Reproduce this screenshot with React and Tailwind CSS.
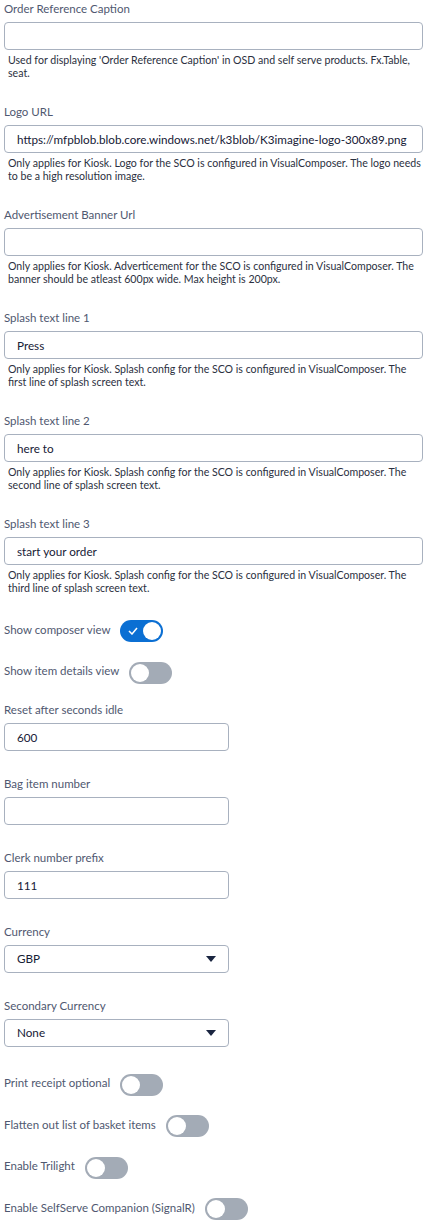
import { useState } from 'react';

const font = { fontFamily: 'Lato, "Noto Sans", sans-serif' };

function TextField({ label, value, help }) {
  return (
    <div className="mb-[23px]">
      <label className="block h-[18px] leading-[18px] text-[11.5px] text-[#4f5870] mb-[4px]">{label}</label>
      <input
        type="text"
        defaultValue={value}
        className="w-[419px] h-[28px] border border-[#a8b1bf] rounded-[4px] px-[12px] text-[11.7px] text-[#162036] outline-none bg-white"
      />
      <p className="mt-[4px] pl-[4px] text-[10.6px] leading-[13px] text-[#2b3040] whitespace-nowrap">
        {help[0]}
        <br />
        {help[1]}
      </p>
    </div>
  );
}

function Toggle({ label, on: initial, last }) {
  const [on, setOn] = useState(initial);
  return (
    <div className={`flex items-center h-[22px] ${last ? '' : 'mb-[19.5px]'}`}>
      <span className="text-[11.5px] text-[#4f5870] mr-[10px] -mt-[3px]">{label}</span>
      <button
        onClick={() => setOn(!on)}
        className={`relative w-[43px] h-[22px] rounded-full ${on ? 'bg-[#0b6fd3]' : 'bg-[#a3abb6]'}`}
      >
        {on && (
          <svg className="absolute left-[8px] top-[7px]" width="10" height="8" viewBox="0 0 10 8">
            <path d="M1 4l3 3 5-6" fill="none" stroke="white" strokeWidth="1.5" />
          </svg>
        )}
        <span
          className={`absolute top-[2px] w-[18px] h-[18px] rounded-full bg-white ${on ? 'left-[23px]' : 'left-[2px]'}`}
        />
      </button>
    </div>
  );
}

function ShortInput({ label, value }) {
  return (
    <div className="mb-[24px]">
      <label className="block h-[18px] leading-[18px] text-[11.5px] text-[#4f5870] mb-[4px]">{label}</label>
      <input type="text" defaultValue={value} className="w-[225px] h-[28px] border border-[#a8b1bf] rounded-[4px] px-[12px] text-[11.7px] text-[#162036] outline-none" />
    </div>
  );
}

function SelectField({ label, value }) {
  return (
    <div className="mb-[24px]">
      <label className="block h-[18px] leading-[18px] text-[11.5px] text-[#4f5870] mb-[4px]">{label}</label>
      <div className="w-[225px] h-[28px] border border-[#a8b1bf] rounded-[4px] pl-[12px] pr-[12px] flex items-center justify-between text-[11.7px] text-[#162036]">
        <span>{value}</span>
        <svg width="10" height="6" viewBox="0 0 10 6">
          <path d="M0 0h10L5 6z" fill="#1a2540" />
        </svg>
      </div>
    </div>
  );
}

export default function App() {
  return (
    <div className="bg-white min-h-screen px-[4px] pt-0 w-[440px]" style={font}>
      <TextField
        label="Order Reference Caption"
        value=""
        help={["Used for displaying 'Order Reference Caption' in OSD and self serve products. Fx.Table,", 'seat.']}
      />
      <TextField
        label="Logo URL"
        value="https://mfpblob.blob.core.windows.net/k3blob/K3imagine-logo-300x89.png"
        help={['Only applies for Kiosk. Logo for the SCO is configured in VisualComposer. The logo needs', 'to be a high resolution image.']}
      />
      <TextField
        label="Advertisement Banner Url"
        value=""
        help={['Only applies for Kiosk. Adverticement for the SCO is configured in VisualComposer. The', 'banner should be atleast 600px wide. Max height is 200px.']}
      />
      <TextField
        label="Splash text line 1"
        value="Press"
        help={['Only applies for Kiosk. Splash config for the SCO is configured in VisualComposer. The', 'first line of splash screen text.']}
      />
      <TextField
        label="Splash text line 2"
        value="here to"
        help={['Only applies for Kiosk. Splash config for the SCO is configured in VisualComposer. The', 'second line of splash screen text.']}
      />
      <TextField
        label="Splash text line 3"
        value="start your order"
        help={['Only applies for Kiosk. Splash config for the SCO is configured in VisualComposer. The', 'third line of splash screen text.']}
      />

      <div className="pt-[2px] pb-[17px]">
        <Toggle label="Show composer view" on={true} />
        <Toggle label="Show item details view" on={false} last />
      </div>

      <ShortInput label="Reset after seconds idle" value="600" />
      <ShortInput label="Bag item number" value="" />
      <ShortInput label="Clerk number prefix" value="111" />
      <SelectField label="Currency" value="GBP" />
      <SelectField label="Secondary Currency" value="None" />

      <div className="pt-[3px]">
        <Toggle label="Print receipt optional" on={false} />
        <Toggle label="Flatten out list of basket items" on={false} />
        <Toggle label="Enable Trilight" on={false} />
        <Toggle label="Enable SelfServe Companion (SignalR)" on={false} last />
      </div>
    </div>
  );
}
